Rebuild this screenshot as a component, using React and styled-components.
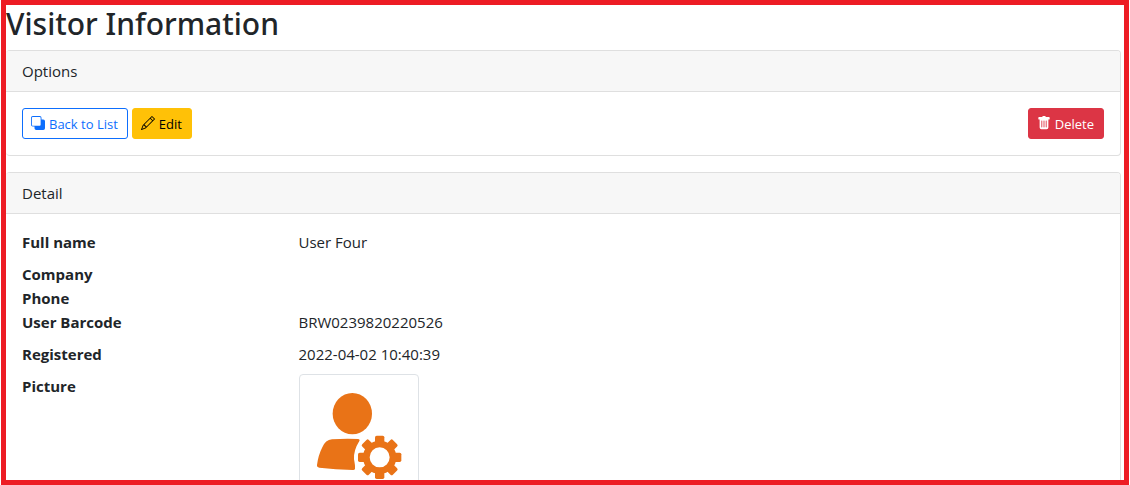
import React from "react";
import styled, { createGlobalStyle, css } from "styled-components";
import { BsBack, BsPencil, BsTrashFill } from "react-icons/bs";

const GlobalStyle = createGlobalStyle`
  *, *::before, *::after { box-sizing: border-box; }
  body {
    margin: 0;
    background: #fff;
    color: #212529;
    font: 400 15px/24px "Segoe UI", "Open Sans", "Noto Sans", sans-serif;
  }
`;

const Frame = styled.main`
  height: 100vh;
  margin: 0 1px;
  padding-right: 3px;
  border: 5px solid #ed1c24;
  overflow: hidden;
`;

const Title = styled.h1`
  margin: 0 0 8px;
  font-family: "Segoe UI", "Noto Sans", sans-serif;
  font-size: 30px;
  font-weight: 500;
  line-height: 37px;
`;

const Card = styled.section`
  margin-bottom: 16px;
  border: 1px solid #dfdfdf;
  border-left: 0;
  border-radius: 4px;
  overflow: hidden;
`;

const CardHeader = styled.header`
  padding: 8px 16px;
  background: #f7f7f7;
  border-bottom: 1px solid #dfdfdf;
`;

const CardBody = styled.div`
  padding: 16px;
`;

const Toolbar = styled.div`
  display: flex;
  justify-content: space-between;
`;

const ButtonGroup = styled.div`
  display: flex;
  gap: 4px;
`;

const variants = {
  outline: css`
    color: #0d6efd;
    background: #fff;
    border-color: #0d6efd;
  `,
  warning: css`
    color: #000;
    background: #ffc107;
    border-color: #ffc107;
  `,
  danger: css`
    color: #fff;
    background: #dc3545;
    border-color: #dc3545;
  `,
};

const Button = styled.button`
  display: inline-flex;
  align-items: center;
  gap: 4px;
  padding: 5px 9px 3px 8px;
  border: 1px solid;
  border-radius: 3px;
  font: inherit;
  font-size: 13px;
  line-height: 21px;
  text-decoration: none;
  white-space: nowrap;
  cursor: pointer;
  ${({ $variant }) => variants[$variant]}

  svg {
    width: 14px;
    height: 14px;
    margin-bottom: 4px;
  }
`;

const DetailList = styled.dl`
  display: grid;
  grid-template-columns: minmax(0, 1fr) minmax(0, 3fr);
  margin: 0 -24px 0 0;
`;

const Term = styled.dt`
  font-weight: 700;
`;

const Value = styled.dd`
  margin: 0 0 8px;
`;

const Thumbnail = styled.svg`
  display: block;
  width: 120px;
  height: 120px;
  padding: 4px;
  border: 1px solid #dee2e6;
  border-radius: 4px;
`;

const teeth = [0, 45, 90, 135, 180, 225, 270, 315];

function UserPicture() {
  return (
    <Thumbnail viewBox="42 57 330 330" role="img" aria-label="User picture" fill="#e97317">
      <ellipse cx="187" cy="161" rx="59" ry="62" />
      <path d="M81 315Q85 285 97 262Q106 240 126 238Q165 235 204 237Q211 238 208 243Q190 272 192 298Q196 318 195 326Q194 331 188 330Q137 328 88 323Q80 322 81 315Z" />
      {teeth.map((angle) => (
        <rect key={angle} x="255" y="227" width="28" height="30" rx="5" transform={`rotate(${angle} 269 292)`} />
      ))}
      <circle cx="269" cy="292" r="40" fill="none" stroke="#e97317" strokeWidth="20" />
    </Thumbnail>
  );
}

const details = [
  ["Full name", "User Four"],
  ["Company", null],
  ["Phone", null],
  ["User Barcode", "BRW0239820220526"],
  ["Registered", "2022-04-02 10:40:39"],
  ["Picture", <UserPicture key="picture" />],
];

export default function App() {
  return (
    <>
      <GlobalStyle />
      <Frame>
        <Title>Visitor Information</Title>
        <Card>
          <CardHeader>Options</CardHeader>
          <CardBody>
            <Toolbar>
              <ButtonGroup>
                <Button as="a" href="#list" $variant="outline">
                  <BsBack aria-hidden="true" />
                  Back to List
                </Button>
                <Button as="a" href="#edit" $variant="warning">
                  <BsPencil aria-hidden="true" />
                  Edit
                </Button>
              </ButtonGroup>
              <Button type="button" $variant="danger">
                <BsTrashFill aria-hidden="true" />
                Delete
              </Button>
            </Toolbar>
          </CardBody>
        </Card>
        <Card>
          <CardHeader>Detail</CardHeader>
          <CardBody>
            <DetailList>
              {details.map(([term, value]) => (
                <React.Fragment key={term}>
                  <Term>{term}</Term>
                  <Value>{value}</Value>
                </React.Fragment>
              ))}
            </DetailList>
          </CardBody>
        </Card>
      </Frame>
    </>
  );
}
